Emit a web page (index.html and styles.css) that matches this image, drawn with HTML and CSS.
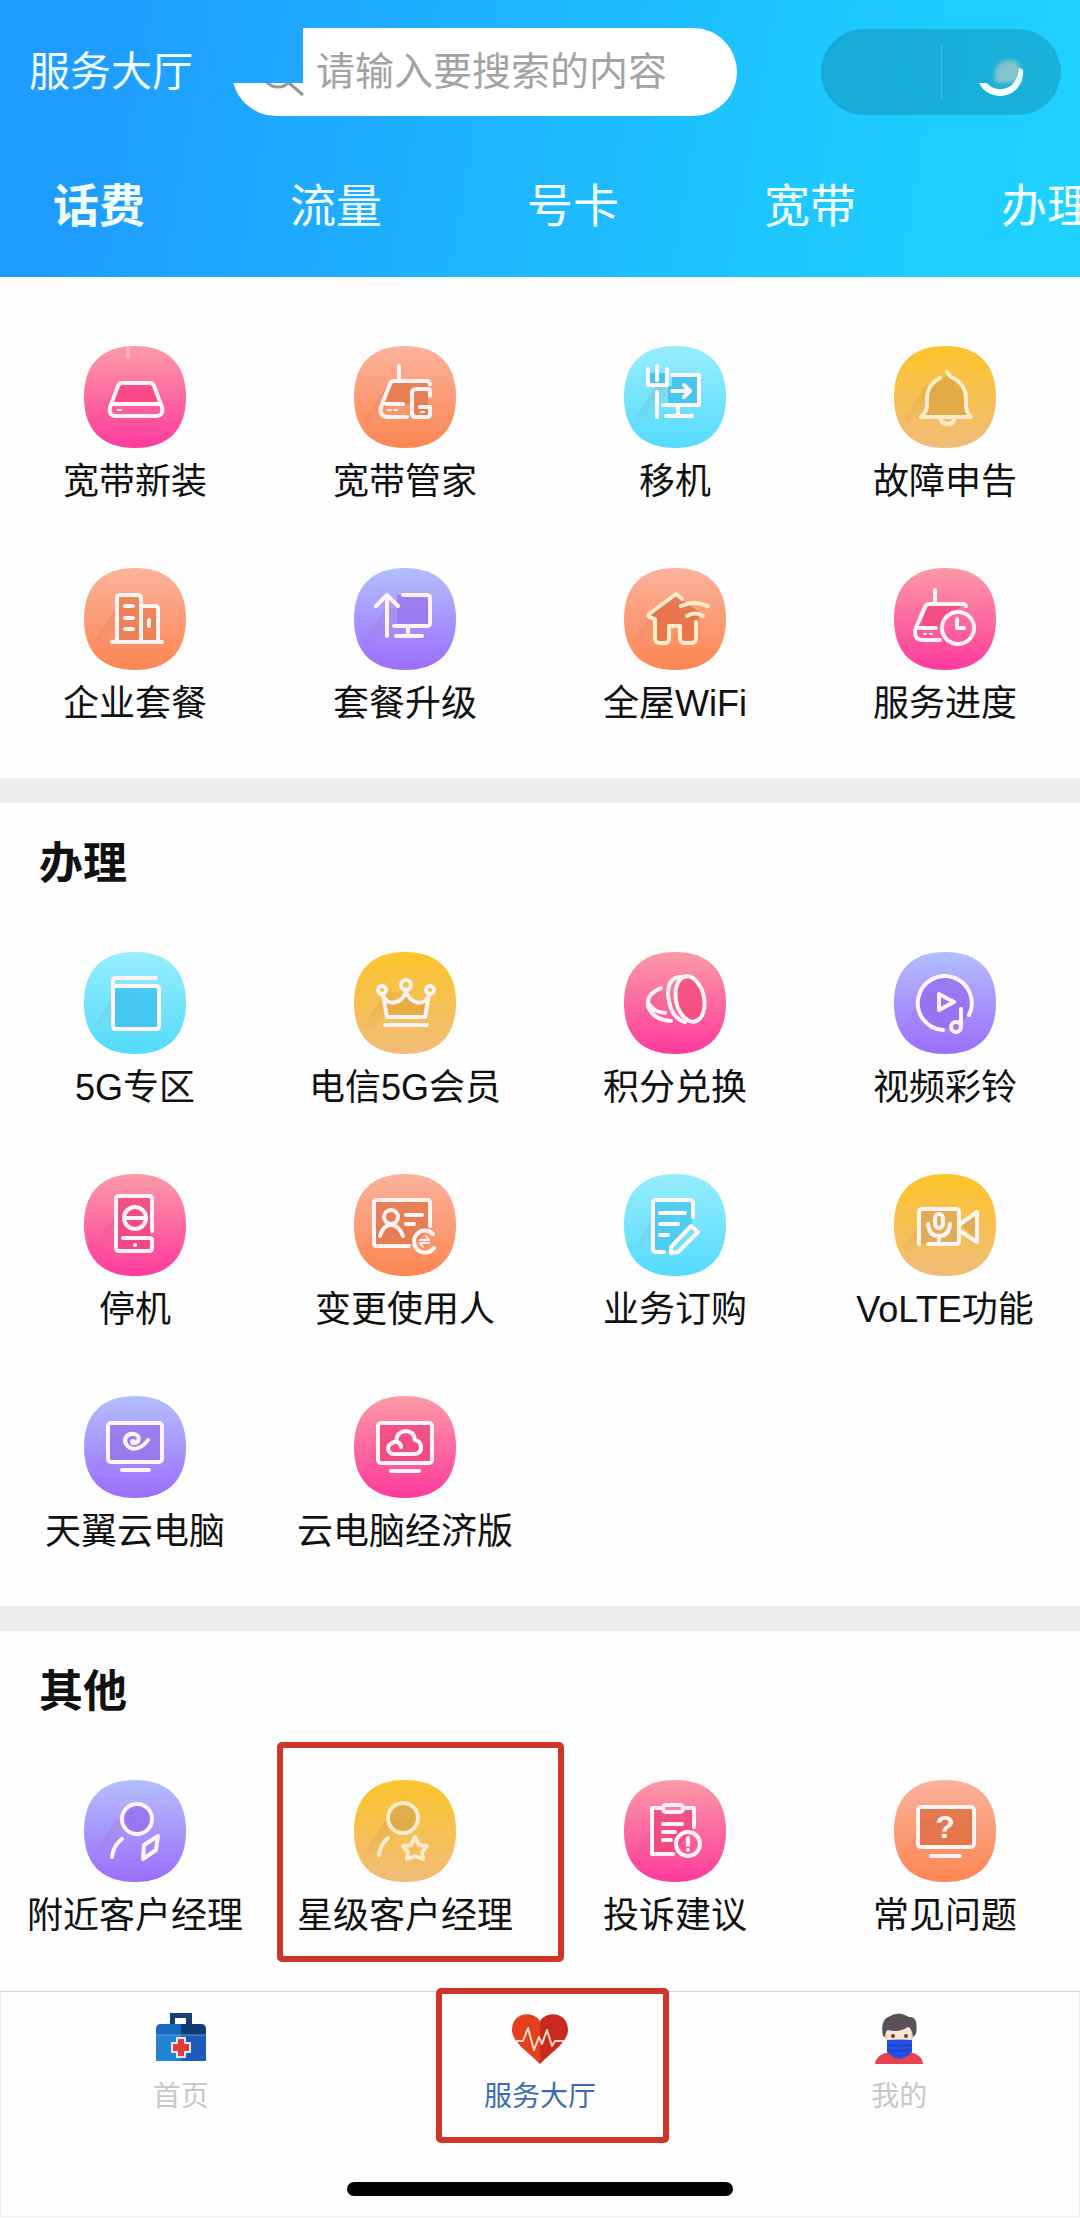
FILE: index.html
```html
<!DOCTYPE html>
<html lang="zh-CN">
<head>
	<meta charset="UTF-8">
	<meta name="viewport" content="width=device-width, initial-scale=1">
	<title>服务大厅</title>
	<link rel="stylesheet" href="styles.css">
</head>
<body>
	<!-- shared gradients and tile shape -->
	<svg class="defs" aria-hidden="true">
		<defs>
			<linearGradient id="pink" x1="0" y1="0" x2="0" y2="1"><stop offset="0" stop-color="#fc9aa6"/><stop offset="1" stop-color="#fd3a9c"/></linearGradient>
			<linearGradient id="orange" x1="0" y1="0" x2="0" y2="1"><stop offset="0" stop-color="#fbb29b"/><stop offset="1" stop-color="#fc8652"/></linearGradient>
			<linearGradient id="cyan" x1="0" y1="0" x2="0" y2="1"><stop offset="0" stop-color="#98edfd"/><stop offset="1" stop-color="#54dbfd"/></linearGradient>
			<linearGradient id="yellow" x1="0" y1="0" x2="0" y2="1"><stop offset="0" stop-color="#fcc42b"/><stop offset="1" stop-color="#f0bc78"/></linearGradient>
			<linearGradient id="purple" x1="0" y1="0" x2="0" y2="1"><stop offset="0" stop-color="#b3bffd"/><stop offset="1" stop-color="#9b6dfb"/></linearGradient>
			<linearGradient id="fade" x1="0" y1="0" x2="0.6" y2="1"><stop offset="0.1" stop-color="#803040" stop-opacity="0.16"/><stop offset="0.6" stop-color="#803040" stop-opacity="0"/></linearGradient>
			<path id="tile" d="M51 0C84 0 102 18 102 51S84 102 51 102 0 84 0 51 18 0 51 0Z"/>
			<path id="shade" d="M32 40L10 74L24 92L52 94V40Z" fill="url(#fade)"/>
		</defs>
	</svg>

	<header class="header">
		<div class="topbar">
			<h1>服务大厅</h1>
			<form class="search">
				<svg width="44" height="44" viewBox="0 0 44 44" aria-hidden="true"><circle cx="16" cy="22" r="15"/><path d="M27 33L41 45"/></svg>
				<input type="search" placeholder="请输入要搜索的内容" aria-label="搜索">
			</form>
			<div class="capsule">
				<button type="button" aria-label="更多"></button>
				<button type="button" aria-label="关闭">
					<svg width="52" height="52" viewBox="0 0 52 52"><path class="blob" d="M20 37V24Q24 14 33 14Q46 14 46 26V37Z"/><path d="M4 37H12Q18 44 27 43C37 42 43 34 44 22L48 24C49 38 39 50 26 50C16 50 8 45 4 37Z"/></svg>
				</button>
			</div>
		</div>
		<nav class="tabs">
			<button type="button" class="active">话费</button>
			<button type="button">流量</button>
			<button type="button">号卡</button>
			<button type="button">宽带</button>
			<button type="button">办理</button>
		</nav>
	</header>

	<main>
		<section class="broadband">
			<div class="grid">
				<a class="item" href="#">
					<svg class="icon" viewBox="0 0 102 102"><use href="#tile" fill="url(#pink)"/><use href="#shade"/><path class="faint" d="M44 3V11"/><path class="in" fill="#f93f82" d="M35 38H68L76 58H28Z"/><path d="M38 37H66Q69 37 70 40L78 61Q80 70 72 70H31Q24 69 26 61L34 40Q35 37 38 37ZM29 58H75"/><path class="thin" d="M34 64H37"/></svg>
					<span>宽带新装</span>
				</a>
				<a class="item" href="#">
					<svg class="icon" viewBox="0 0 102 102"><use href="#tile" fill="url(#orange)"/><use href="#shade"/><path class="in" fill="#df774b" d="M37 36H74V70H58V58H29Z"/><path d="M45 20V34M76 38L74 35H40Q37 35 36 38L27 61Q25 70 33 71H53M32 58H49M76 50V45Q76 43 73 43H62Q58 43 58 47V67Q58 71 62 71H73Q76 71 76 68V61H66"/><path class="thin" d="M34 64H37M40 64H43M67 66H70"/></svg>
					<span>宽带管家</span>
				</a>
				<a class="item" href="#">
					<svg class="icon" viewBox="0 0 102 102"><use href="#tile" fill="url(#cyan)"/><use href="#shade"/><path class="in" fill="#34bce8" d="M26 27H43V40H26ZM48 30H74V59H44V40H48Z"/><path d="M24 23V39H43V23M33 20V34M33 46V71M48 29H75V59H39M54 59V69M42 70H68M48 45H66M60 39L66 45L60 51"/></svg>
					<span>移机</span>
				</a>
				<a class="item" href="#">
					<svg class="icon" viewBox="0 0 102 102"><use href="#tile" fill="url(#yellow)"/><use href="#shade"/><path class="in" fill="#dca443" d="M53 30Q68 36 70 52L74 70H31L34 52Q36 36 53 30Z"/><path class="cream" d="M46 32Q34 38 33 51V59Q33 66 27 71H77Q72 66 72 59V51Q71 37 57 31L53 26"/><path class="cream" d="M47 74Q48 78 54 78Q59 78 60 74"/></svg>
					<span>故障申告</span>
				</a>
				<a class="item" href="#">
					<svg class="icon" viewBox="0 0 102 102"><use href="#tile" fill="url(#orange)"/><use href="#shade"/><path class="in" fill="#e87b4f" d="M34 27H57V38H75V73H34Z"/><path d="M28 74H78M33 74V30Q33 27 36 27H54Q57 27 57 30V74M57 38H71Q74 38 74 41V74M41 38H49M41 50H49M41 61H49M65 52V58"/></svg>
					<span>企业套餐</span>
				</a>
				<a class="item" href="#">
					<svg class="icon" viewBox="0 0 102 102"><use href="#tile" fill="url(#purple)"/><use href="#shade"/><path class="in" fill="#9873ee" d="M43 27H75V58H43Z"/><path d="M33 68V28M22 38L33 27L44 38M49 27H73Q76 27 76 30V55Q76 58 73 58H40M54 58V68M42 68H68"/></svg>
					<span>套餐升级</span>
				</a>
				<a class="item" href="#">
					<svg class="icon" viewBox="0 0 102 102"><use href="#tile" fill="url(#orange)"/><use href="#shade"/><path class="in" fill="#e2693f" d="M52 27L76 45L71 74H58V58H44V74H31V50L26 47Z"/><path class="cream" d="M58 31L52 26L25 46Q23 49 31 51V70Q31 75 36 75H41Q45 75 45 70V58H56V70Q56 75 61 75H67Q72 75 72 70V54M57 38Q70 32 84 38M63 48Q71 43 79 48"/></svg>
					<span>全屋WiFi</span>
				</a>
				<a class="item" href="#">
					<svg class="icon" viewBox="0 0 102 102"><use href="#tile" fill="url(#pink)"/><use href="#shade"/><path class="in" fill="#f1447f" d="M34 38H68L50 50L46 60H26Z"/><path d="M41 22V36M72 38L70 36H35Q32 36 31 39L21 62Q20 72 29 72H46M25 60H42"/><circle cx="64" cy="60" r="16"/><path d="M63 51V60H70"/><path class="thin" d="M30 66H32M36 66H38"/></svg>
					<span>服务进度</span>
				</a>
			</div>
		</section>

		<section>
			<h2>办理</h2>
			<div class="grid">
				<a class="item" href="#">
					<svg class="icon" viewBox="0 0 102 102"><use href="#tile" fill="url(#cyan)"/><use href="#shade"/><path class="in" fill="#38c0ee" d="M30 35H75V77H30Z"/><path d="M72 26H32Q29 26 29 29V74Q29 77 32 77H72Q75 77 75 74V37Q75 34 72 34H29"/></svg>
					<span>5G专区</span>
				</a>
				<a class="item" href="#">
					<svg class="icon" viewBox="0 0 102 102"><use href="#tile" fill="url(#yellow)"/><use href="#shade"/><path class="in" fill="#e2a442" d="M30 44L42 50L52 38L62 50L75 44L71 65H34Z"/><circle cx="28" cy="38" r="4"/><circle cx="52" cy="33" r="5"/><circle cx="76" cy="38" r="4"/><path d="M29 43L33 65H71L75 43C70 55 57 52 52 40C47 52 34 55 29 43ZM31 73H73"/></svg>
					<span>电信5G会员</span>
				</a>
				<a class="item" href="#">
					<svg class="icon" viewBox="0 0 102 102"><use href="#tile" fill="url(#pink)"/><use href="#shade"/><ellipse class="in" fill="#f14b79" cx="66" cy="47" rx="14" ry="22" transform="rotate(-12 66 47)"/><ellipse cx="66" cy="47" rx="14" ry="23" transform="rotate(-12 66 47)"/><path d="M61 25Q44 23 44 42Q46 66 61 70M37 36Q22 42 24 54Q29 68 47 69M25 52Q30 60 41 61"/></svg>
					<span>积分兑换</span>
				</a>
				<a class="item" href="#">
					<svg class="icon" viewBox="0 0 102 102"><use href="#tile" fill="url(#purple)"/><use href="#shade"/><circle class="in" fill="#936bed" cx="50" cy="51" r="26"/><path d="M49 78A27 27 0 1 1 75 63M45 42V58L60 50ZM67 57V74"/><circle cx="62" cy="75" r="5"/></svg>
					<span>视频彩铃</span>
				</a>
				<a class="item" href="#">
					<svg class="icon" viewBox="0 0 102 102"><use href="#tile" fill="url(#pink)"/><use href="#shade"/><path class="in" fill="#ee4280" d="M33 24H67V76H33Z"/><path d="M68 57V25Q68 22 65 22H35Q32 22 32 25V74Q32 77 35 77H65Q68 77 68 74V67Q68 64 65 64H39"/><circle cx="51" cy="44" r="11"/><path d="M40 44H62"/><circle class="dot" cx="51" cy="71" r="2"/></svg>
					<span>停机</span>
				</a>
				<a class="item" href="#">
					<svg class="icon" viewBox="0 0 102 102"><use href="#tile" fill="url(#orange)"/><use href="#shade"/><path class="in" fill="#df7549" d="M22 28H75V54L60 70H22Z"/><path d="M55 72H23Q20 72 20 69V29Q20 26 23 26H73Q76 26 76 29V52"/><circle cx="37" cy="43" r="7"/><path d="M26 62Q29 51 37 51T49 62M52 41H68M52 50H60M79 60A11 11 0 1 0 80 74"/><path class="thin" d="M66 66H75L72 62M75 69H66L69 73"/></svg>
					<span>变更使用人</span>
				</a>
				<a class="item" href="#">
					<svg class="icon" viewBox="0 0 102 102"><use href="#tile" fill="url(#cyan)"/><use href="#shade"/><path class="in" fill="#41c5ec" d="M30 27H68V52L45 77H30Z"/><path d="M69 43V29Q69 26 66 26H32Q29 26 29 29V75Q29 78 32 78H40M36 39H61M36 50H54M36 61H44M47 79V73L67 52L74 58L54 78Z"/></svg>
					<span>业务订购</span>
				</a>
				<a class="item" href="#">
					<svg class="icon" viewBox="0 0 102 102"><use href="#tile" fill="url(#yellow)"/><use href="#shade"/><path class="in" fill="#d9a757" d="M26 36H64V70H26ZM68 52L82 40V66Z"/><path d="M25 70V38Q25 35 28 35H62Q65 35 65 38V67Q65 70 62 70H34M66 50L83 38V68L66 57"/><rect x="41" y="40" width="8" height="14" rx="4"/><path d="M34 50Q35 62 45 62T56 50M45 62V70"/></svg>
					<span>VoLTE功能</span>
				</a>
				<a class="item" href="#">
					<svg class="icon" viewBox="0 0 102 102"><use href="#tile" fill="url(#purple)"/><use href="#shade"/><path class="in" fill="#9474ea" d="M26 29H76V64H26Z"/><rect x="24" y="27" width="54" height="39" rx="3"/><path d="M38 74H65M49 47C56 48 57 39 50 38C43 37 39 43 42 48C47 56 58 53 64 44"/><circle class="dot" cx="49" cy="46" r="3"/></svg>
					<span>天翼云电脑</span>
				</a>
				<a class="item" href="#">
					<svg class="icon" viewBox="0 0 102 102"><use href="#tile" fill="url(#pink)"/><use href="#shade"/><path class="in" fill="#ed467e" d="M26 29H76V65H26Z"/><rect x="24" y="27" width="54" height="40" rx="3"/><path d="M37 75H65M47 51Q46 45 40 46Q34 48 34 53Q35 58 40 58H61Q68 57 67 50Q66 45 61 44Q60 35 51 35Q43 36 42 45"/></svg>
					<span>云电脑经济版</span>
				</a>
			</div>
		</section>

		<section>
			<h2>其他</h2>
			<div class="grid">
				<a class="item" href="#">
					<svg class="icon" viewBox="0 0 102 102"><use href="#tile" fill="url(#purple)"/><use href="#shade"/><circle class="in" fill="#936bed" cx="53" cy="39" r="15"/><circle cx="53" cy="39" r="15"/><path d="M38 59Q29 66 28 77M74 56L60 65L59 79L72 70Z"/></svg>
					<span>附近客户经理</span>
				</a>
				<a class="item marked" href="#">
					<svg class="icon" viewBox="0 0 102 102"><use href="#tile" fill="url(#yellow)"/><use href="#shade"/><circle class="in" fill="#d9a54a" cx="49" cy="38" r="15"/><circle class="cream" cx="49" cy="38" r="15"/><path class="cream" d="M34 58Q26 65 25 75M61 57L65 65L73 66L68 72L69 79L61 76L53 79L54 72L49 66L57 65Z"/></svg>
					<span>星级客户经理</span>
				</a>
				<a class="item" href="#">
					<svg class="icon" viewBox="0 0 102 102"><use href="#tile" fill="url(#pink)"/><use href="#shade"/><path class="in" fill="#ec437f" d="M30 30H68V50L50 72H30Z"/><path d="M38 28H28V74H49M60 28H70V47M39 44H58M39 52H51M39 60H47"/><rect x="39" y="25" width="20" height="7" rx="3"/><circle cx="64" cy="64" r="12"/><path d="M64 58V65M64 70V70"/></svg>
					<span>投诉建议</span>
				</a>
				<a class="item" href="#">
					<svg class="icon" viewBox="0 0 102 102"><use href="#tile" fill="url(#orange)"/><use href="#shade"/><path class="in" fill="#df6b3d" d="M26 29H78V66H26Z"/><rect x="24" y="27" width="56" height="40" rx="3"/><path d="M37 76H66"/><text x="51" y="58" text-anchor="middle">?</text></svg>
					<span>常见问题</span>
				</a>
			</div>
		</section>
	</main>

	<footer class="footer">
		<nav class="tabbar">
			<a href="#">
				<svg width="52" height="52" viewBox="0 0 52 52"><path fill="#14406f" d="M15 0H37V14H31V5H20V14H15Z"/><path fill="#1769bd" d="M1 22V16Q1 11 6 11H26V22Z"/><path fill="#103c75" d="M26 11H46Q51 11 51 16V22H26Z"/><path fill="#2384d6" d="M1 22H26V48H1Z"/><path fill="#1d5cbd" d="M26 22H51V48H26Z"/><path stroke="#6599cc" d="M1 22H51"/><path fill="#e23d31" stroke="#dce4f5" stroke-width="2" d="M22 25H30V30H35V39H30V44H22V39H17V30H22Z"/></svg>
				<span>首页</span>
			</a>
			<a href="#" class="active marked">
				<svg width="56" height="52" viewBox="0 0 56 52"><path fill="#e5401e" d="M28 8C21-3 0-1 0 17C0 29 16 39 28 51Z"/><path fill="#c92a20" d="M28 8C35-3 56-1 56 17C56 29 40 39 28 51Z"/><path fill="none" stroke="#ffd9c2" stroke-width="2" stroke-linejoin="round" d="M3 28H11L16 15L22 37L27 24L30 31L35 17L40 33L43 28H53"/></svg>
				<span>服务大厅</span>
			</a>
			<a href="#">
				<svg width="52" height="52" viewBox="0 0 52 52"><path fill="#e54254" d="M2 51Q3 41 17 39H36Q49 41 50 51Z"/><path fill="#f2cdb5" d="M11 16H41Q43 23 39 27V35L26 43L14 35V27Q9 23 11 16Z"/><path fill="#fbe3d0" d="M14 15H38V31H14Z"/><path fill="#59505a" d="M10 23Q7 8 15 4Q26-3 36 4Q46 3 43 21L40 24Q39 15 35 14Q26 20 15 17Q12 18 12 24Z"/><circle fill="#5a4846" cx="20" cy="23" r="2"/><circle fill="#5a4846" cx="33" cy="23" r="2"/><path fill="#2650e4" d="M14 27Q26 26 39 27V39Q35 44 26 46Q18 44 14 39Z"/><path fill="none" stroke="#173bb5" d="M14 32Q26 34 39 32M14 37Q26 39 39 37"/></svg>
				<span>我的</span>
			</a>
		</nav>
		<div class="home-indicator"></div>
	</footer>
</body>
</html>
```
FILE: styles.css
```css
* {
	box-sizing: border-box;
}
body {
	margin: 0;
	background-color: #fefefe;
	color: #111;
	font-family: "Liberation Sans", "Noto Sans CJK SC", sans-serif;
	font-size: 36px;
}
a {
	color: inherit;
	text-decoration: none;
}
button {
	margin: 0;
	padding: 0;
	border: none;
	background: none;
	color: inherit;
	font: inherit;
}
.defs {
	position: absolute;
	width: 0;
	height: 0;
}

/* header */
.header {
	padding: 28px 0 41px;
	background: linear-gradient(100deg, #1e9cff 8%, #1eb4ff 45%, #1dc8ff 75%, #1fd2ff);
	color: #f2ffff;
}
.topbar {
	display: flex;
	align-items: center;
	padding: 0 19px 0 29px;
}
h1 {
	flex: none;
	width: 203px;
	margin: 0;
	font-size: 41px;
	font-weight: normal;
	line-height: 60px;
}
.search {
	flex: 1;
	display: flex;
	align-items: center;
	gap: 10px;
	min-width: 0;
	height: 88px;
	margin: 0 84px 0 0;
	padding: 0 30px;
	border-radius: 44px;
	background-color: #fefffe;
	/* upper left corner is cut out */
	clip-path: polygon(71px 0, 100% 0, 100% 100%, 0 100%, 0 55px, 71px 55px);
}
.search svg {
	flex: none;
	fill: none;
	stroke: #999;
	stroke-width: 3;
	overflow: visible;
}
.search input {
	flex: 1;
	min-width: 0;
	height: 60px;
	padding: 0;
	border: none;
	outline: none;
	background: none;
	font: inherit;
	font-size: 39px;
}
.search input::placeholder {
	color: #a3a3a3;
}
.capsule {
	flex: none;
	display: flex;
	align-items: center;
	width: 240px;
	height: 86px;
	border-radius: 43px;
	background-color: rgba(0, 0, 0, 0.15);
}
.capsule button {
	flex: 1;
	display: flex;
	align-items: center;
	justify-content: center;
	height: 54px;
}
.capsule button + button {
	border-left: 1px solid #45bce2;
}
.capsule path {
	fill: #f2ffff;
}
.capsule .blob {
	fill: #82c4cb;
	filter: blur(2px);
}
.tabs {
	display: flex;
	gap: 145px;
	margin-top: 60px;
	padding-left: 53px;
	overflow: hidden;
}
.tabs button {
	flex: none;
	font-size: 46px;
	line-height: 60px;
}
.tabs .active {
	font-weight: bold;
}

/* service sections */
section {
	padding: 31px 0 50px;
}
section + section {
	border-top: 25px solid #eee;
}
.broadband {
	padding-top: 69px;
}
h2 {
	margin: 0 0 58px;
	padding-left: 39px;
	font-size: 44px;
	line-height: 60px;
}
.grid {
	display: grid;
	grid-template-columns: repeat(4, 1fr);
	row-gap: 62px;
}
.item {
	position: relative;
	display: flex;
	flex-direction: column;
	align-items: center;
	gap: 10px;
	line-height: 48px;
	white-space: nowrap;
}
.icon {
	width: 102px;
	height: 102px;
	fill: none;
	stroke-linecap: round;
	stroke-linejoin: round;
}
.icon > path, .icon > circle, .icon > rect, .icon > ellipse {
	stroke: #fff3f4;
	stroke-width: 4;
}
.icon > .in {
	stroke: none;
	opacity: 0.75;
}
.icon > .thin {
	stroke-width: 2;
}
.icon > .faint {
	opacity: 0.4;
}
.icon > .cream {
	stroke: #ffeccb;
}
.icon > .dot {
	fill: #fff3f4;
	stroke: none;
}
.icon text {
	fill: #fff3f4;
	font-size: 32px;
	font-weight: bold;
}

/* red frames */
.marked {
	position: relative;
}
.marked::after {
	content: "";
	position: absolute;
	border: 6px solid #cf3529;
	border-radius: 5px;
}
.item.marked::after {
	top: -38px;
	right: -24px;
	bottom: -22px;
	left: 7px;
}

/* bottom bar */
.footer {
	margin-top: 1px;
	padding-bottom: 20px;
	border: 1px solid #eee;
	border-top-color: #d2d2d2;
}
.tabbar {
	display: grid;
	grid-template-columns: repeat(3, 1fr);
	margin-bottom: 67px;
}
.tabbar a {
	display: flex;
	flex-direction: column;
	align-items: center;
	gap: 14px;
	padding-top: 21px;
	color: #c8c8c8;
	font-size: 28px;
	line-height: 36px;
}
.tabbar .active {
	color: #3d6cb4;
}
.tabbar .marked::after {
	top: -4px;
	right: 51px;
	bottom: -28px;
	left: 76px;
}
.home-indicator {
	width: 386px;
	height: 14px;
	margin: 0 auto;
	border-radius: 7px;
	background-color: #000;
}
```
